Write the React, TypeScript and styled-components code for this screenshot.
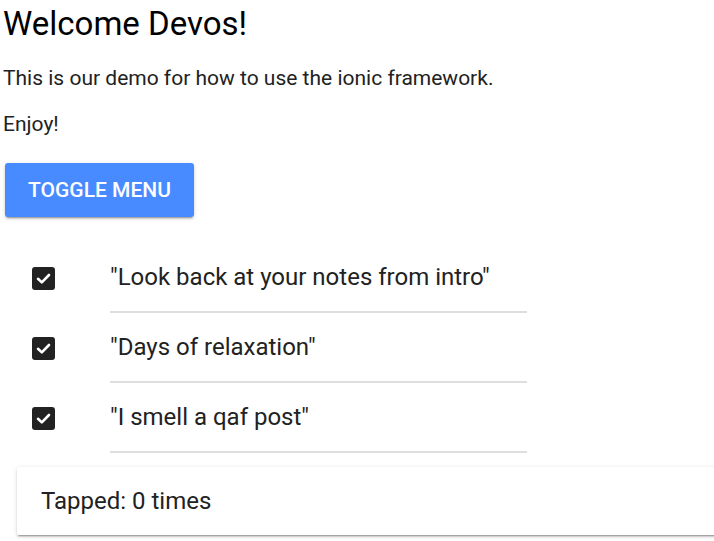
import React from "react";
import styled, { createGlobalStyle } from "styled-components";

const Global = createGlobalStyle`
  html, body { margin: 0; padding: 0; background: #fff; }
  body { font-family: Roboto, "Noto Sans", sans-serif; color: #000; overflow: hidden; }
`;

const Page = styled.div`
  width: 714px;
  height: 541px;
  overflow: hidden;
  padding: 4px 0 0 3px;
  box-sizing: border-box;
`;

const Title = styled.h1`
  margin: 0;
  font-size: 33px;
  font-weight: 400;
  line-height: 40px;
  color: #000;
`;

const Para = styled.p<{ $first?: boolean }>`
  margin: ${(p) => (p.$first ? "11px" : "0")} 0 0 0;
  font-size: 21px;
  line-height: 46px;
  color: #222;
`;

const ToggleButton = styled.button`
  display: block;
  margin: 16px 0 0 2px;
  width: 189px;
  height: 54px;
  padding: 0;
  border: none;
  border-radius: 3px;
  background: #488aff;
  color: #fff;
  font-family: Roboto, sans-serif;
  font-size: 21px;
  font-weight: 500;
  text-transform: uppercase;
  box-shadow: 0 2px 2px 0 rgba(0,0,0,.14), 0 3px 1px -2px rgba(0,0,0,.2), 0 1px 5px 0 rgba(0,0,0,.12);
  cursor: pointer;
`;

const List = styled.div`
  margin-top: 26px;
  display: flex;
  flex-direction: column;
`;

const Item = styled.div`
  display: flex;
  align-items: stretch;
  height: 70px;
  padding-left: 29px;
`;

const BoxCol = styled.div`
  width: 78px;
  display: flex;
  align-items: center;
`;

const Box = styled.span`
  width: 23px;
  height: 23px;
  border-radius: 3px;
  background: #222;
  display: flex;
  align-items: center;
  justify-content: center;
`;

const Label = styled.div`
  width: 417px;
  display: flex;
  align-items: center;
  border-bottom: 2px solid #dedede;
  box-sizing: border-box;
  font-size: 24px;
  color: #222;
`;

const Card = styled.div`
  margin: 14px 0 0 14px;
  width: 760px;
  height: 68px;
  background: #fff;
  border-radius: 2px;
  display: flex;
  align-items: center;
  padding-left: 24px;
  box-sizing: border-box;
  font-size: 24px;
  color: #222;
  box-shadow: 0 2px 2px 0 rgba(0,0,0,.14), 0 3px 1px -2px rgba(0,0,0,.2), 0 1px 5px 0 rgba(0,0,0,.12);
`;

const Check = () => (
  <svg width="23" height="23" viewBox="0 0 23 23">
    <path d="M6 11.8 L9.8 15.4 L17 8" fill="none" stroke="#fff" strokeWidth="2.6" strokeLinecap="round" strokeLinejoin="round" />
  </svg>
);

const items = [
  '"Look back at your notes from intro"',
  '"Days of relaxation"',
  '"I smell a qaf post"',
];

export default function App() {
  return (
    <>
      <Global />
      <Page>
        <Title>Welcome Devos!</Title>
        <Para $first>This is our demo for how to use the ionic framework.</Para>
        <Para>Enjoy!</Para>
        <ToggleButton>Toggle Menu</ToggleButton>
        <List>
          {items.map((t) => (
            <Item key={t}>
              <BoxCol>
                <Box>
                  <Check />
                </Box>
              </BoxCol>
              <Label>{t}</Label>
            </Item>
          ))}
        </List>
        <Card>Tapped: 0 times</Card>
      </Page>
    </>
  );
}
